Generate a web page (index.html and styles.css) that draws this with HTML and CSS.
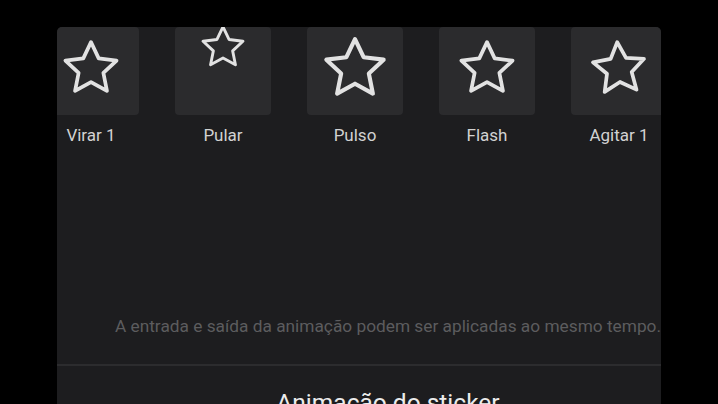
FILE: index.html
```html
<!DOCTYPE html>
<html lang="pt">
<head>
    <meta charset="UTF-8">
    <meta name="viewport" content="width=device-width, initial-scale=1.0">
    <title>Animação do sticker</title>
    <link rel="stylesheet" href="styles.css">
</head>
<body>
    <div class="screen">
        <div class="inner">
            <div class="effects">
                <div class="effect">
                    <div class="tile">
                        <svg class="star" viewBox="0 0 24 24"><polygon points="12,2.6 14.8,8.5 21.3,9.3 16.5,13.8 17.8,20.3 12,17.1 6.2,20.3 7.5,13.8 2.7,9.3 9.2,8.5"/></svg>
                    </div>
                    <div class="label">Virar 1</div>
                </div>
                <div class="effect">
                    <div class="tile">
                        <svg class="star star-jump" viewBox="0 0 24 24"><polygon points="12,2.6 14.8,8.5 21.3,9.3 16.5,13.8 17.8,20.3 12,17.1 6.2,20.3 7.5,13.8 2.7,9.3 9.2,8.5"/></svg>
                    </div>
                    <div class="label">Pular</div>
                </div>
                <div class="effect">
                    <div class="tile">
                        <svg class="star star-pulse" viewBox="0 0 24 24"><polygon points="12,2.6 14.8,8.5 21.3,9.3 16.5,13.8 17.8,20.3 12,17.1 6.2,20.3 7.5,13.8 2.7,9.3 9.2,8.5"/></svg>
                    </div>
                    <div class="label">Pulso</div>
                </div>
                <div class="effect">
                    <div class="tile">
                        <svg class="star" viewBox="0 0 24 24"><polygon points="12,2.6 14.8,8.5 21.3,9.3 16.5,13.8 17.8,20.3 12,17.1 6.2,20.3 7.5,13.8 2.7,9.3 9.2,8.5"/></svg>
                    </div>
                    <div class="label">Flash</div>
                </div>
                <div class="effect">
                    <div class="tile">
                        <svg class="star star-shake" viewBox="0 0 24 24"><polygon points="12,2.6 14.8,8.5 21.3,9.3 16.5,13.8 17.8,20.3 12,17.1 6.2,20.3 7.5,13.8 2.7,9.3 9.2,8.5"/></svg>
                    </div>
                    <div class="label">Agitar 1</div>
                </div>
            </div>

            <p class="hint">A entrada e saída da animação podem ser aplicadas ao mesmo tempo.</p>

            <div class="sheet">
                <h2 class="sheet-title">Animação do sticker</h2>
            </div>
        </div>
    </div>
</body>
</html>
```

FILE: styles.css
```css
html, body {
    margin: 0;
    background: #000;
    height: 100%;
    overflow: hidden;
}
body {
    font-family: Roboto, "Noto Sans", sans-serif;
}
.screen {
    margin: 27px 0 0 57px;
    width: 604px;
    height: 377px;
    background: #1d1d1f;
    border-radius: 5px 5px 0 0;
    overflow: hidden;
}
.inner {
    width: 662px;
}
.effects {
    display: flex;
    gap: 36px;
    margin-left: -14px;
}
.effect {
    width: 96px;
    flex-shrink: 0;
}
.tile {
    height: 88px;
    background: #2b2b2d;
    border-radius: 4px;
    display: flex;
    align-items: center;
    justify-content: center;
}
.star {
    width: 66px;
    height: 66px;
    margin-top: -7px;
    fill: none;
    stroke: #e2e2e2;
    stroke-width: 1.35;
    stroke-linejoin: round;
}
.star-jump {
    transform: translateY(-21px) scale(0.78);
}
.star-pulse {
    transform: scale(1.12);
}
.star-shake {
    transform: rotate(-4deg);
}
.label {
    margin-top: 10px;
    text-align: center;
    font-size: 17px;
    color: #d2d2d2;
}
.hint {
    margin: 171px 0 0;
    text-align: center;
    white-space: nowrap;
    font-size: 17.3px;
    color: #5c5c5e;
}
.sheet {
    margin-top: 28px;
    border-top: 2px solid #2c2c2e;
    padding-top: 22px;
}
.sheet-title {
    margin: 0;
    text-align: center;
    font-weight: 400;
    font-size: 24.5px;
    color: #ececec;
}
```
